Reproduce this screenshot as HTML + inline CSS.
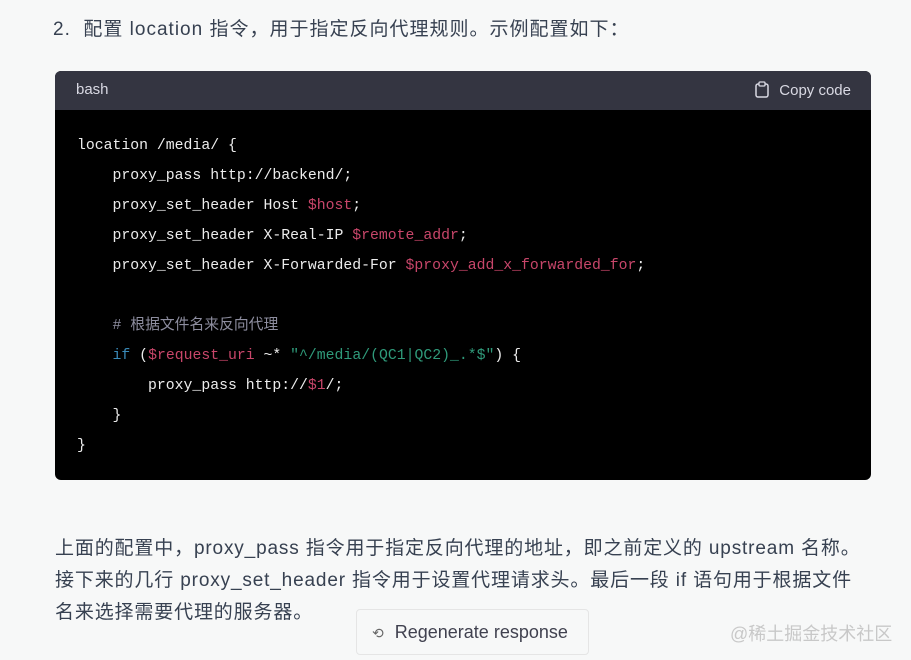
<!DOCTYPE html>
<html><head><meta charset="utf-8"><style>
body{margin:0;width:911px;height:660px;background:#f7f8f8;overflow:hidden;font-family:"Liberation Sans","Noto Sans CJK SC",sans-serif;color:#374151;position:relative}
.t{position:absolute;font-size:19px;white-space:nowrap;letter-spacing:0.85px}
.box{position:absolute;left:55px;top:71px;width:816px;height:409px;background:#000;border-radius:6px;overflow:hidden}
.hd{height:39px;background:#343541;color:#d9d9e3;font-size:15px;position:relative}
.hd .l{position:absolute;left:21px;top:10px}
.hd .r{position:absolute;right:20px;top:10px}
pre{margin:0;position:absolute;left:22px;top:60px;font-family:"Liberation Mono","Noto Sans CJK SC",monospace;font-size:14.8px;line-height:30px;color:#ececec}
.v{color:#c8466a}.s{color:#2f9a7a}.c{color:#8e8ea0}.k{color:#3a8ab8}
</style></head><body>
<div class="t" style="left:53px;top:14px;letter-spacing:1.0px">2.&nbsp; 配置 location 指令，用于指定反向代理规则。示例配置如下：</div>
<div class="box">
<div class="hd"><span class="l">bash</span><span class="r"><svg width="14" height="17" viewBox="0 0 14 17" style="vertical-align:-3px;margin-right:10px"><rect x="1" y="3" width="12" height="13" rx="2" fill="none" stroke="#d9d9e3" stroke-width="1.5"/><rect x="4" y="1" width="6" height="4" rx="1" fill="#343541" stroke="#d9d9e3" stroke-width="1.3"/></svg>Copy code</span></div>
<pre>location /media/ {
    proxy_pass http://backend/;
    proxy_set_header Host <span class="v">$host</span>;
    proxy_set_header X-Real-IP <span class="v">$remote_addr</span>;
    proxy_set_header X-Forwarded-For <span class="v">$proxy_add_x_forwarded_for</span>;

    <span class="c"># 根据文件名来反向代理</span>
    <span class="k">if</span> (<span class="v">$request_uri</span> ~* <span class="s">"^/media/(QC1|QC2)_.*$"</span>) {
        proxy_pass http://<span class="v">$1</span>/;
    }
}</pre>
</div>
<div class="t" style="left:55px;top:533px">上面的配置中，proxy_pass 指令用于指定反向代理的地址，即之前定义的 upstream 名称。</div>
<div class="t" style="left:55px;top:565px">接下来的几行 proxy_set_header 指令用于设置代理请求头。最后一段 if 语句用于根据文件</div>
<div class="t" style="left:55px;top:597px">名来选择需要代理的服务器。</div>
<div style="position:absolute;left:356px;top:609px;width:231px;height:44px;border:1px solid #e5e5e5;border-radius:4px;background:#f7f8f8;font-size:18px;line-height:44px;color:#40414f"><span style="margin-left:15px;font-size:14px;color:#666">⟲</span> <span style="margin-left:6px">Regenerate response</span></div>
<div style="position:absolute;left:730px;top:620px;font-size:18px;color:#c8c8c8">@稀土掘金技术社区</div>
</body></html>
